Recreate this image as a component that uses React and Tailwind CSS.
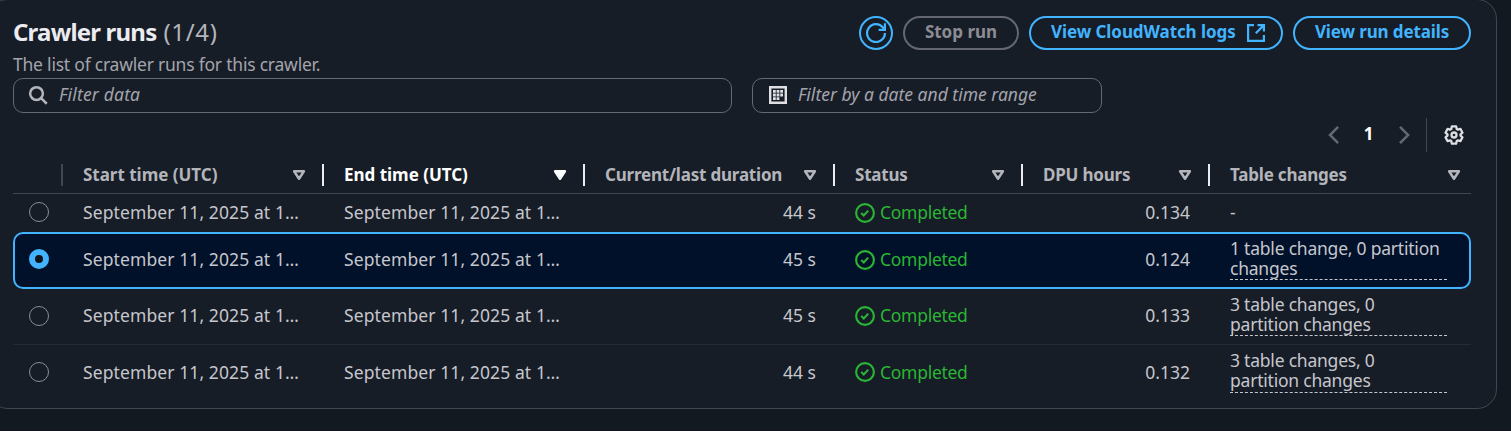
const rows = [
  { duration: "44 s", dpu: "0.134", changes: null },
  { duration: "45 s", dpu: "0.124", changes: "1 table change, 0 partition\nchanges", selected: true },
  { duration: "45 s", dpu: "0.133", changes: "3 table changes, 0\npartition changes" },
  { duration: "44 s", dpu: "0.132", changes: "3 table changes, 0\npartition changes" },
];

const columns = [
  { label: "Start time (UTC)" },
  { label: "End time (UTC)", sorted: true },
  { label: "Current/last duration", tight: true },
  { label: "Status", tight: true },
  { label: "DPU hours", tight: true },
  { label: "Table changes", last: true, tight: true },
];

const GRID = "grid grid-cols-[50px_261px_261px_250px_188px_187px_261px]";

function Icon({ children, className = "", width = 2, size = 20 }) {
  return (
    <svg viewBox="0 0 16 16" width={size} height={size} fill="none" stroke="currentColor" strokeWidth={width} className={"shrink-0 " + className}>
      {children}
    </svg>
  );
}

function SortIcon({ filled }) {
  return (
    <svg viewBox="0 0 14 12" width="14" height="12" className="shrink-0" fill={filled ? "currentColor" : "none"} stroke="currentColor" strokeWidth="2.5" strokeLinejoin="round">
      <path d="M2.1 2.3h9.8L7 9.7z" />
    </svg>
  );
}

function Header() {
  return (
    <div className={GRID + " h-[38px] border-b border-[#424650]"}>
      <div className="flex justify-end pt-[8px]">
        <div className="h-[22px] w-[2px] bg-[#424650]" />
      </div>
      {columns.map((c) => (
        <div key={c.label} className={"flex items-start pl-[20px] pt-[8px] " + (c.sorted ? "text-white" : "text-[#b4b4bb]")}>
          <div className="flex h-[22px] flex-1 items-center justify-between">
            <span className={"text-[17px] font-bold whitespace-nowrap " + (c.tight ? "tracking-[-0.2px]" : "tracking-[-0.02px]")}>{c.label}</span>
            <SortIcon filled={c.sorted} />
          </div>
          <div className={"ml-[16px] h-[22px] w-[2px] " + (c.last ? "mr-[-8px]" : "bg-[#ebebf0]")} />
        </div>
      ))}
    </div>
  );
}

function Row({ row, index }) {
  const frame = row.selected
    ? "h-[57px] pb-[2px] rounded-[10px] bg-[#001129] shadow-[inset_0_0_0_2px_#42b4ff]"
    : index === 0
      ? "h-[38px] pb-[1px]"
      : index === 2
        ? "h-[56px] pb-[2px] border-b border-[#232b37]"
        : "h-[56px] pb-[2px]";
  const radioOffset = index === 1 ? "mt-[-2px]" : index === 0 ? "mt-[-1px]" : "mt-0";
  return (
    <div className={GRID + " items-center text-[17.5px] text-[#c6c6cd] whitespace-nowrap " + frame}>
      <div className="pl-[16px]">
        {row.selected ? (
          <div className={"size-[20px] rounded-full border-[6px] border-[#42b4ff] bg-[#0f141a] " + radioOffset} />
        ) : (
          <div className={"size-[20px] rounded-full border border-[#8c8c94] " + radioOffset} />
        )}
      </div>
      <div className="pl-[20px] tracking-[0.1px]">September 11, 2025 at 1…</div>
      <div className="pl-[20px] tracking-[0.1px]">September 11, 2025 at 1…</div>
      <div className="pr-[19px] text-right">{row.duration}</div>
      <div className="flex items-center gap-[5px] pl-[20px] text-[#2bb534]">
        <Icon width={1.7}>
          <circle cx="8" cy="8" r="7.1" />
          <path d="m5 8 2 2 3.6-3.9" />
        </Icon>
        <span className="tracking-[-0.28px]">Completed</span>
      </div>
      <div className="pr-[20px] text-right">{row.dpu}</div>
      <div className="pl-[20px] tracking-[-0.22px]">
        {row.changes ? (
          <div className={"flex w-[217px] items-start border-b border-dashed border-[#c6c6cd] leading-[20px] " + (index === 3 ? "h-[42px]" : "mb-[1px] h-[41px]")}>
            <span className="mt-[-1px] whitespace-pre">{row.changes}</span>
          </div>
        ) : (
          "-"
        )}
      </div>
    </div>
  );
}

export default function App() {
  return (
    <div className="h-[431px] w-[1511px] overflow-hidden border-b border-[#10131b] bg-[#131920] font-['Noto_Sans',sans-serif]">
      <div className="mt-[-1px] ml-[-12px] h-[410px] w-[1509px] rounded-[20px] border border-[#424650] bg-[#161d26] pt-[16px] pl-[24px]">
        <div className="flex h-[62px] w-[1458px] justify-between">
          <div>
            <h2 className="flex h-[33px] gap-[7px] text-[24px] leading-[31px] whitespace-nowrap text-[#b4b4bb]">
              <span className="font-bold tracking-[-0.8px] text-[#ebebf0]">Crawler runs</span>
              <span className="tracking-[0.7px]">(1/4)</span>
            </h2>
            <p className="text-[17.5px] leading-[31px] tracking-[-0.22px] whitespace-nowrap text-[#a4a4ad]">The list of crawler runs for this crawler.</p>
          </div>
          <div className="flex h-[34px] gap-[10px] text-[17px] font-bold whitespace-nowrap text-[#42b4ff]">
            <button className="flex size-[34px] items-center justify-center rounded-full border-2 border-[#42b4ff]">
              <svg viewBox="0 0 20 20" width="20" height="20" className="shrink-0" fill="none" stroke="currentColor" strokeWidth="2.2">
                <path d="M18.9 10A8.9 8.9 0 1 1 17 4.6L18.6 6.4M12.6 6.8h6.3V.2" />
              </svg>
            </button>
            <button className="flex h-[34px] w-[116px] items-center justify-center rounded-full border-2 border-[#656871] pb-[2px] text-[#8c8c94]">Stop run</button>
            <button className="flex h-[34px] w-[254px] items-center gap-[11px] rounded-full border-2 border-[#42b4ff] pl-[20px]">
              <span className="pb-[2px] tracking-[-0.08px]">View CloudWatch logs</span>
              <svg viewBox="0 0 18 18" width="18" height="18" className="shrink-0" fill="none" stroke="currentColor" strokeWidth="2.2">
                <path d="M7 1.1H1.1v15.8h15.8V11M10.5 1.1h6.4v6.4M16.6 1.4 8.8 9.2" />
              </svg>
            </button>
            <button className="flex h-[34px] w-[178px] items-center justify-center rounded-full border-2 border-[#42b4ff] pb-[2px] tracking-[-0.12px]">View run details</button>
          </div>
        </div>
        <div className="flex gap-[20px] text-[17.5px] text-[#a4a4ad] italic">
          <div className="flex h-[35px] w-[719px] items-center gap-[11px] rounded-[10px] border border-[#656871] pl-[14px]">
            <Icon className="mb-[1px] text-[#b4b4bb]">
              <circle cx="6.8" cy="6.8" r="5.1" />
              <path d="m10.5 10.5 4.5 4.5" />
            </Icon>
            <span className="pb-[2px] tracking-[0.18px]">Filter data</span>
          </div>
          <div className="flex h-[35px] w-[350px] items-center gap-[10px] rounded-[10px] border border-[#656871] pl-[15px]">
            <svg viewBox="0 0 20 20" width="20" height="20" className="mb-[1px] shrink-0 text-[#dedee3]" fill="currentColor">
              <path fillRule="evenodd" d="M1 1h18v18H1zM3.4 3.4v13.2h13.2V3.4z" />
              <path d="M5 5h2.8v2.8H5zM8.6 5h2.8v2.8H8.6zM12.2 5H15v2.8h-2.8zM5 8.6h2.8v2.8H5zM8.6 8.6h2.8v2.8H8.6zM12.2 8.6H15v2.8h-2.8zM5 12.2h2.8V15H5zM8.6 12.2h2.8V15H8.6z" />
            </svg>
            <span className="pb-[2px]">Filter by a date and time range</span>
          </div>
        </div>
        <div className="mt-[5px] flex h-[34px] w-[1458px] items-center justify-end pr-[7px]">
          <Icon className="text-[#656871]">
            <path d="M11.3 1.5 4.8 8l6.5 6.5" />
          </Icon>
          <span className="w-[50px] pr-[1px] pb-[2px] text-center text-[17px] font-bold text-white">1</span>
          <Icon className="text-[#656871]">
            <path d="M4.8 1.5 11.3 8l-6.5 6.5" />
          </Icon>
          <div className="mr-[17px] ml-[12px] h-[34px] w-px bg-[#424650]" />
          <svg viewBox="0 0 20 20" width="20" height="20" className="shrink-0 text-[#dedee3]" fill="none" stroke="currentColor" strokeWidth="2.3" strokeLinejoin="round">
            <path d="M7.9 1.3h4.2l.7 2.8 1 .6 2.6-.9 2.1 3.9-2 1.7v1.2l2 1.7-2.1 3.9-2.6-.9-1 .6-.7 2.8H7.9l-.7-2.8-1-.6-2.6.9-2.1-3.9 2-1.7V9.4l-2-1.7 2.1-3.9 2.6.9 1-.6z" />
            <circle cx="10" cy="10" r="2.5" />
          </svg>
        </div>
        <div className="mt-[4px] w-[1458px]">
          <Header />
          {rows.map((row, i) => (
            <Row key={i} row={row} index={i} />
          ))}
        </div>
      </div>
    </div>
  );
}
